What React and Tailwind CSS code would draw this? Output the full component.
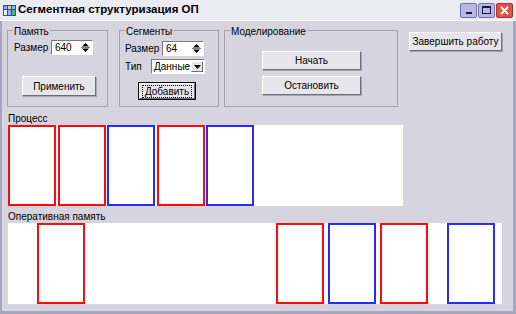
import React from 'react';

const processBlocks = ['red', 'red', 'blue', 'red', 'blue'];
const memoryBlocks = [
  { x: 29, color: 'red' },
  { x: 268, color: 'red' },
  { x: 320, color: 'blue' },
  { x: 372, color: 'red' },
  { x: 439, color: 'blue' },
];

const Group = ({ label, className, children }) => (
  <div className={`relative border border-[#a3a2b0] ${className}`}>
    <span className="absolute -top-[6px] left-[5px] px-[1px] leading-[13px] bg-[#d6d4de]">{label}</span>
    {children}
  </div>
);

const Button = ({ children, className = '' }) => (
  <div className={`flex items-center justify-center bg-[#e6e5ec] border border-t-white border-l-white border-b-[#6e6e78] border-r-[#6e6e78] shadow-[1px_1px_0_#a6a6b2] ${className}`}>
    {children}
  </div>
);

const SpinArrows = () => (
  <svg width="9" height="11" viewBox="0 0 9 11" className="mr-[2px]">
    <path d="M4.5 1 L8 4.5 L1 4.5 Z" fill="#000" />
    <line x1="0" y1="5.5" x2="9" y2="5.5" stroke="#808080" />
    <path d="M1 6.5 L8 6.5 L4.5 10 Z" fill="#000" />
  </svg>
);

const Spin = ({ value, className = '' }) => (
  <div className={`flex items-center bg-white border border-t-[#7a7a84] border-l-[#7a7a84] border-b-white border-r-white ${className}`}>
    <span className="flex-1 pl-[3px] leading-none">{value}</span>
    <SpinArrows />
  </div>
);

const Block = ({ color, className = '', style }) => (
  <div
    className={`h-full w-[48px] bg-white border-2 ${color === 'red' ? 'border-[#ff0a0a]' : 'border-[#2a2aff]'} ${className}`}
    style={style}
  />
);

export default function App() {
  return (
    <div className="w-[516px] h-[314px] flex flex-col bg-[#d6d4de] text-black text-[10px] font-['Liberation_Sans',sans-serif] overflow-hidden">
      {/* Title bar */}
      <div className="h-[21px] flex items-center bg-[#ebebf4] border-b border-white">
        <svg width="13" height="13" viewBox="0 0 13 13" className="ml-[3px]">
          <rect x="0" y="1" width="13" height="11" fill="#2848c8" />
          <rect x="1" y="2" width="3" height="3" fill="#7fb0ff" />
          <rect x="5" y="2" width="3" height="3" fill="#ffd040" />
          <rect x="9" y="2" width="3" height="3" fill="#7fb0ff" />
          <rect x="1" y="6" width="3" height="5" fill="#ffffff" />
          <rect x="5" y="6" width="3" height="5" fill="#7fb0ff" />
          <rect x="9" y="6" width="3" height="5" fill="#40c060" />
        </svg>
        <span className="ml-[2px] text-[11.5px] font-bold">Сегментная структуризация ОП</span>
        <div className="ml-auto mr-[3px] flex gap-[1px]">
          <div className="w-[17px] h-[15px] rounded-[2px] bg-[#b6b9e4] border border-[#7072a8] flex items-end justify-center pb-[3px]">
            <div className="w-[6px] h-[2px] bg-[#1a1a40]" />
          </div>
          <div className="w-[17px] h-[15px] rounded-[2px] bg-[#b6b9e4] border border-[#7072a8] flex items-center justify-center">
            <div className="w-[9px] h-[8px] border border-t-2 border-[#1a1a40]" />
          </div>
          <div className="w-[17px] h-[15px] rounded-[2px] bg-[#e05446] border border-[#a83228] flex items-center justify-center">
            <svg width="9" height="9" viewBox="0 0 9 9">
              <path d="M1 1 L8 8 M8 1 L1 8" stroke="#fff" strokeWidth="1.8" />
            </svg>
          </div>
        </div>
      </div>

      {/* Body */}
      <div className="flex-1 flex flex-col border-l-2 border-r-[3px] border-b-[3px] border-[#a6a6c0]">
        {/* Top row */}
        <div className="flex items-start ml-[5px] mt-[9px]">
          <Group label="Память" className="w-[101px] h-[77px] pt-[9px] pl-[6px]">
            <div className="flex items-center">
              <span className="w-[37px]">Размер</span>
              <Spin value="640" className="w-[42px] h-[15px]" />
            </div>
            <Button className="mt-[21px] ml-[8px] w-[74px] h-[20px]">Применить</Button>
          </Group>

          <Group label="Сегменты" className="ml-[11px] w-[100px] h-[77px] pt-[10px] pl-[5px]">
            <div className="flex items-center">
              <span className="w-[37px]">Размер</span>
              <Spin value="64" className="w-[42px] h-[15px]" />
            </div>
            <div className="flex items-center mt-[3px]">
              <span className="w-[26px]">Тип</span>
              <div className="flex items-center w-[54px] h-[15px] bg-white border border-t-[#7a7a84] border-l-[#7a7a84] border-b-white border-r-white">
                <span className="flex-1 pl-[2px] leading-none">Данные</span>
                <div className="w-[12px] h-[11px] mr-[1px] flex items-center justify-center bg-[#e6e5ec] border border-t-white border-l-white border-b-[#6e6e78] border-r-[#6e6e78]">
                  <svg width="7" height="4" viewBox="0 0 7 4">
                    <path d="M0 0 L7 0 L3.5 4 Z" fill="#000" />
                  </svg>
                </div>
              </div>
            </div>
            <div className="mt-[8px] ml-[13px] w-[58px] h-[18px] border border-black">
              <div className="w-full h-full flex items-center justify-center bg-[#e6e5ec] border border-t-white border-l-white border-b-[#6e6e78] border-r-[#6e6e78]">
                <span className="px-[2px] border border-dotted border-black leading-[11px]">Добавить</span>
              </div>
            </div>
          </Group>

          <Group label="Моделирование" className="ml-[5px] w-[174px] h-[77px] pt-[20px] pl-[37px]">
            <Button className="w-[99px] h-[19px]">Начать</Button>
            <Button className="mt-[6px] w-[99px] h-[19px]">Остановить</Button>
          </Group>

          <Button className="ml-[11px] mt-[2px] w-[93px] h-[19px]">Завершить работу</Button>
        </div>

        {/* Process */}
        <div className="ml-[6px] mt-[5px] leading-[13px]">Процесс</div>
        <div className="ml-[6px] w-[395px] h-[81px] bg-white flex gap-[1.5px]">
          {processBlocks.map((c, i) => (
            <Block key={i} color={c} />
          ))}
        </div>

        {/* Memory */}
        <div className="ml-[6px] mt-[4px] leading-[13px]">Оперативная память</div>
        <div className="relative ml-[6px] w-[494px] h-[81px] bg-white">
          {memoryBlocks.map((b, i) => (
            <Block key={i} color={b.color} className="absolute top-0" style={{ left: b.x }} />
          ))}
        </div>
      </div>
    </div>
  );
}
